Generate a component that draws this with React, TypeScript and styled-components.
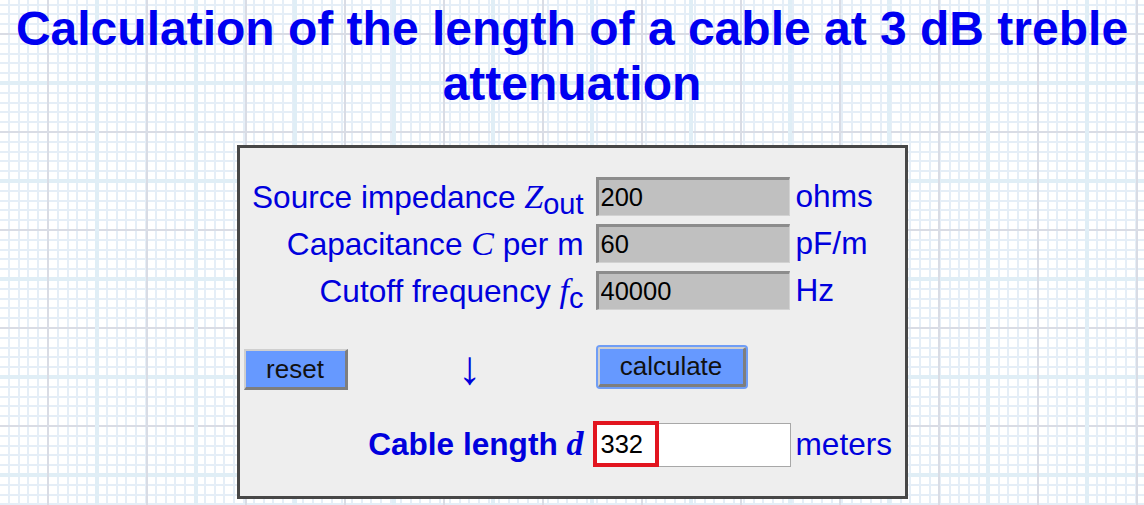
import styled, { createGlobalStyle } from "styled-components";

// graph paper: minor lines every ~9.8px, grey + light blue majors alternating every 49px
const GlobalStyle = createGlobalStyle`
  html, body {
    margin: 0;
    padding: 0;
  }
  body {
    min-height: 100vh;
    font-family: "Liberation Sans", Arial, sans-serif;
    background-color: #ffffff;
    background-image:
      repeating-linear-gradient(90deg, transparent 0 47px, #d9dce5 47px 49px, transparent 49px 95px, #e0eef6 95px 99px, transparent 99px 98px),
      repeating-linear-gradient(180deg, transparent 0 33px, #d9dce5 33px 35px, transparent 35px 81px, #e0eef6 81px 85px, transparent 85px 98px),
      repeating-linear-gradient(90deg, transparent 0 7.8px, #e5eef7 7.8px 9.8px),
      repeating-linear-gradient(180deg, transparent 0 3.6px, #e5eef7 3.6px 5.6px, transparent 5.6px 9.8px);
  }
`;

const Title = styled.h1`
  margin: 1px 0 0;
  padding: 0 8px;
  text-align: center;
  color: #0000f0;
  font: bold 48px/55px "Liberation Sans", Arial, sans-serif;
`;

const Panel = styled.form`
  box-sizing: border-box;
  width: 671px;
  margin: 34px auto 0;
  padding: 29px 0 29px 4px;
  border: 3px solid #474747;
  background: #eeeeee;
  display: flex;
  flex-direction: column;
`;

const Row = styled.div<{ $top?: number; $align?: string }>`
  display: grid;
  grid-template-columns: 346px 194px auto;
  column-gap: 6px;
  align-items: ${(p) => p.$align ?? "center"};
  margin-top: ${(p) => p.$top ?? 0}px;
`;

const Label = styled.label<{ $bold?: boolean }>`
  justify-self: end;
  padding-right: 6px;
  color: #0000dd;
  font-size: 31.6px;
  font-weight: ${(p) => (p.$bold ? "bold" : "normal")};
  white-space: nowrap;
`;

const MathVar = styled.i<{ $bold?: boolean }>`
  font-family: "Liberation Serif", "Times New Roman", serif;
  font-size: 34px;
  font-weight: ${(p) => (p.$bold ? "bold" : "normal")};
`;

const Sub = styled.span`
  font-size: 29px;
  position: relative;
  top: 6px;
`;

const Field = styled.input`
  box-sizing: border-box;
  width: 194px;
  height: 39px;
  margin: 0;
  padding: 0 0 0 2px;
  border-style: solid;
  border-width: 3px 1px 1px 3px;
  border-color: #8c8c8c #d2d2d2 #d2d2d2 #8c8c8c;
  background: #c0c0c0;
  color: #000;
  font: 25.5px "Liberation Sans", Arial, sans-serif;
  outline: none;
`;

const Unit = styled.span`
  color: #0000dd;
  font-size: 31.6px;
  white-space: nowrap;
`;

const ButtonCell = styled.div`
  display: flex;
  align-items: flex-start;
`;

const Button = styled.button<{ $focused?: boolean }>`
  box-sizing: border-box;
  height: ${(p) => (p.$focused ? 40 : 41)}px;
  margin: ${(p) => (p.$focused ? "2px" : "4px 0 0")};
  padding: 0;
  border-style: solid;
  border-width: 2px 3px 3px 2px;
  border-color: #cfcfcf #7e7e7e #7e7e7e #cfcfcf;
  border-radius: ${(p) => (p.$focused ? 2 : 0)}px;
  box-shadow: ${(p) => (p.$focused ? "0 0 0 2px #6f9df6" : "none")};
  background: #6699ff;
  color: #111;
  font: 26px "Liberation Sans", Arial, sans-serif;
`;

const Arrow = styled.span`
  flex: 1;
  text-align: center;
  color: #0000dd;
  font: 47px/1 "Liberation Sans", Arial, sans-serif;
  margin-top: -1px;
  padding-left: 2px;
`;

const Output = styled.div`
  box-sizing: border-box;
  display: flex;
  width: 197px;
  height: 44px;
  margin: 2px 0 0 -2px;
  border: 1px solid #a8a8a8;
  background: #ffffff;
`;

const Highlight = styled.span`
  box-sizing: border-box;
  display: flex;
  align-items: center;
  width: 66px;
  height: 46px;
  margin: -3px 0 0 -2px;
  padding-left: 4px;
  border: 4px solid #e2151f;
  background: #ffffff;
  color: #000;
  font-size: 25.5px;
`;

export default function App() {
  return (
    <>
      <GlobalStyle />
      <Title>Calculation of the length of a cable at 3 dB treble attenuation</Title>
      <Panel onSubmit={(e) => e.preventDefault()}>
        <Row>
          <Label htmlFor="zout">
            Source impedance <MathVar>Z</MathVar>
            <Sub>out</Sub>
          </Label>
          <Field id="zout" defaultValue="200" />
          <Unit>ohms</Unit>
        </Row>
        <Row $top={8}>
          <Label htmlFor="cap">
            Capacitance <MathVar>C</MathVar> per m
          </Label>
          <Field id="cap" defaultValue="60" />
          <Unit>pF/m</Unit>
        </Row>
        <Row $top={8}>
          <Label htmlFor="fc">
            Cutoff frequency <MathVar>f</MathVar>
            <Sub>c</Sub>
          </Label>
          <Field id="fc" defaultValue="40000" />
          <Unit>Hz</Unit>
        </Row>
        <Row $top={35} $align="start">
          <ButtonCell>
            <Button type="reset" style={{ width: 104 }}>
              reset
            </Button>
            <Arrow>↓</Arrow>
          </ButtonCell>
          <div>
            <Button type="button" $focused style={{ width: 148 }}>
              calculate
            </Button>
          </div>
          <span />
        </Row>
        <Row $top={30}>
          <Label $bold>
            Cable length <MathVar $bold>d</MathVar>
          </Label>
          <Output>
            <Highlight>332</Highlight>
          </Output>
          <Unit>meters</Unit>
        </Row>
      </Panel>
    </>
  );
}
